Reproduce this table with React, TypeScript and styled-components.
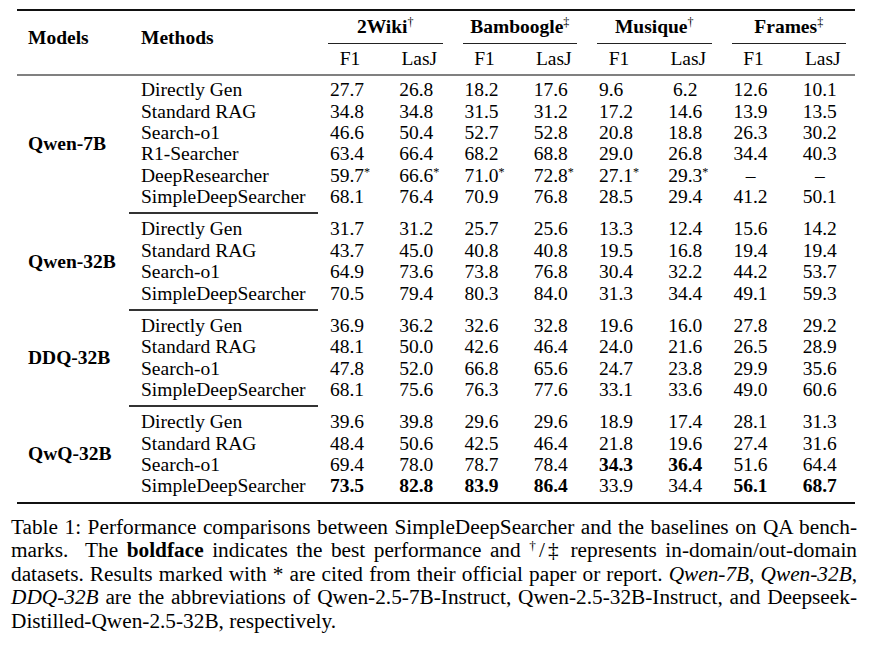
import React from "react";
import styled, { createGlobalStyle } from "styled-components";

const GlobalStyle = createGlobalStyle`
  html, body { margin: 0; padding: 0; background: #fff; }
  body {
    font-family: "Liberation Serif", "Times New Roman", Times, serif;
    color: #000;
  }
`;

const Page = styled.div`
  padding: 9px 0 0 11px;
  width: 846px;
`;

const TableBox = styled.div`
  margin-left: 6px;
  width: 838px;
  border-top: 2px solid #111;
  border-bottom: 2px solid #111;
  font-size: 19.5px;
`;

const Header = styled.div`
  display: grid;
  grid-template-columns: 112px 189px repeat(4, 134.5px);
  grid-template-rows: 32.5px 30.5px;
  border-bottom: 2px solid #808080;
`;

const HeadLabel = styled.div<{ $indent: number; $col: number }>`
  grid-row: 1 / 3;
  grid-column: ${(p) => p.$col};
  padding: 16.3px 0 0 ${(p) => p.$indent}px;
  font-weight: 700;
  line-height: 21.4px;
`;

const GroupHead = styled.div<{ $col: number }>`
  grid-row: 1;
  grid-column: ${(p) => p.$col};
  padding: 0 10px;
`;

const GroupLabel = styled.div`
  height: 31.5px;
  line-height: 31.5px;
  text-align: center;
  font-weight: 700;
  border-bottom: 1px solid #222;
`;

const SubHead = styled.div<{ $col: number }>`
  grid-row: 2;
  grid-column: ${(p) => p.$col};
  display: grid;
  grid-template-columns: 58px 76.5px;
  line-height: 30.5px;
`;

const SubCell = styled.div<{ $wide?: boolean }>`
  text-align: center;
  padding-left: ${(p) => (p.$wide ? 10 : 6)}px;
`;

const Sup = styled.span`
  font-size: 0.62em;
  vertical-align: 0.55em;
  line-height: 0;
  font-weight: 400;
`;

const Star = styled.span`
  display: inline-block;
  width: 0;
  font-size: 0.62em;
  vertical-align: 0.5em;
  line-height: 0;
  overflow: visible;
`;

const Body = styled.div`
  padding: 3.3px 0 5px;
`;

const Group = styled.div`
  display: grid;
  grid-template-columns: 112px 1fr;
`;

const ModelLabel = styled.div`
  align-self: center;
  padding-left: 11px;
  font-weight: 700;
  line-height: 21.4px;
`;

const Rows = styled.div`
  display: flex;
  flex-direction: column;
`;

const Row = styled.div`
  display: grid;
  grid-template-columns: 189px repeat(4, 58px 76.5px);
  height: 21.4px;
  line-height: 21.4px;
  white-space: nowrap;
`;

const Method = styled.div`
  padding-left: 12px;
`;

const Num = styled.div<{ $wide: boolean; $bold: boolean; $shift: boolean }>`
  text-align: center;
  padding-left: ${(p) => (p.$wide ? 4 : 0)}px;
  padding-right: ${(p) => (p.$shift ? "0.5em" : "0")};
  font-weight: ${(p) => (p.$bold ? 700 : 400)};
`;

const GroupRule = styled.div`
  margin: 4.5px 0 4.3px 112px;
  width: 189px;
  border-top: 2px solid #333;
`;

const Caption = styled.div`
  margin-top: 12px;
  width: 846px;
  font-size: 21.3px;
  line-height: 23.5px;
`;

const CaptionLine = styled.div<{ $last?: boolean }>`
  text-align: justify;
  text-align-last: ${(p) => (p.$last ? "left" : "justify")};
`;

type RowData = { method: string; vals: string[] };
type GroupData = { model: string; rows: RowData[] };

// "**" prefix = bold, "<" prefix = nudged left, trailing "*" = starred superscript
const groups: GroupData[] = [
  {
    model: "Qwen-7B",
    rows: [
      { method: "Directly Gen", vals: ["27.7", "26.8", "18.2", "17.6", "<9.6", "6.2", "12.6", "10.1"] },
      { method: "Standard RAG", vals: ["34.8", "34.8", "31.5", "31.2", "17.2", "14.6", "13.9", "13.5"] },
      { method: "Search-o1", vals: ["46.6", "50.4", "52.7", "52.8", "20.8", "18.8", "26.3", "30.2"] },
      { method: "R1-Searcher", vals: ["63.4", "66.4", "68.2", "68.8", "29.0", "26.8", "34.4", "40.3"] },
      { method: "DeepResearcher", vals: ["59.7*", "66.6*", "71.0*", "72.8*", "27.1*", "29.3*", "–", "–"] },
      { method: "SimpleDeepSearcher", vals: ["68.1", "76.4", "70.9", "76.8", "28.5", "29.4", "41.2", "50.1"] },
    ],
  },
  {
    model: "Qwen-32B",
    rows: [
      { method: "Directly Gen", vals: ["31.7", "31.2", "25.7", "25.6", "13.3", "12.4", "15.6", "14.2"] },
      { method: "Standard RAG", vals: ["43.7", "45.0", "40.8", "40.8", "19.5", "16.8", "19.4", "19.4"] },
      { method: "Search-o1", vals: ["64.9", "73.6", "73.8", "76.8", "30.4", "32.2", "44.2", "53.7"] },
      { method: "SimpleDeepSearcher", vals: ["70.5", "79.4", "80.3", "84.0", "31.3", "34.4", "49.1", "59.3"] },
    ],
  },
  {
    model: "DDQ-32B",
    rows: [
      { method: "Directly Gen", vals: ["36.9", "36.2", "32.6", "32.8", "19.6", "16.0", "27.8", "29.2"] },
      { method: "Standard RAG", vals: ["48.1", "50.0", "42.6", "46.4", "24.0", "21.6", "26.5", "28.9"] },
      { method: "Search-o1", vals: ["47.8", "52.0", "66.8", "65.6", "24.7", "23.8", "29.9", "35.6"] },
      { method: "SimpleDeepSearcher", vals: ["68.1", "75.6", "76.3", "77.6", "33.1", "33.6", "49.0", "60.6"] },
    ],
  },
  {
    model: "QwQ-32B",
    rows: [
      { method: "Directly Gen", vals: ["39.6", "39.8", "29.6", "29.6", "18.9", "17.4", "28.1", "31.3"] },
      { method: "Standard RAG", vals: ["48.4", "50.6", "42.5", "46.4", "21.8", "19.6", "27.4", "31.6"] },
      { method: "Search-o1", vals: ["69.4", "78.0", "78.7", "78.4", "**34.3", "**36.4", "51.6", "64.4"] },
      { method: "SimpleDeepSearcher", vals: ["**73.5", "**82.8", "**83.9", "**86.4", "33.9", "34.4", "**56.1", "**68.7"] },
    ],
  },
];

const datasets: { name: string; mark: string }[] = [
  { name: "2Wiki", mark: "†" },
  { name: "Bamboogle", mark: "‡" },
  { name: "Musique", mark: "†" },
  { name: "Frames", mark: "‡" },
];

function parseValue(v: string) {
  let raw = v;
  const bold = raw.startsWith("**");
  if (bold) raw = raw.slice(2);
  const shift = raw.startsWith("<");
  if (shift) raw = raw.slice(1);
  const star = raw.endsWith("*");
  const text = star ? raw.slice(0, -1) : raw;
  return { bold, shift, node: star ? (<>{text}<Star>*</Star></>) : text };
}

export default function App() {
  return (
    <>
      <GlobalStyle />
      <Page>
        <TableBox>
          <Header>
            <HeadLabel $col={1} $indent={11}>Models</HeadLabel>
            <HeadLabel $col={2} $indent={12}>Methods</HeadLabel>
            {datasets.map((d, i) => (
              <GroupHead key={d.name} $col={i + 3}>
                <GroupLabel>
                  {d.name}
                  <Sup>{d.mark}</Sup>
                </GroupLabel>
              </GroupHead>
            ))}
            {datasets.map((d, i) => (
              <SubHead key={d.name + "-sub"} $col={i + 3}>
                <SubCell>F1</SubCell>
                <SubCell $wide>LasJ</SubCell>
              </SubHead>
            ))}
          </Header>
          <Body>
            {groups.map((g, gi) => (
              <React.Fragment key={g.model}>
                {gi > 0 && <GroupRule />}
                <Group>
                  <ModelLabel>{g.model}</ModelLabel>
                  <Rows>
                    {g.rows.map((r) => (
                      <Row key={r.method}>
                        <Method>{r.method}</Method>
                        {r.vals.map((v, vi) => {
                          const { bold, shift, node } = parseValue(v);
                          return (
                            <Num key={vi} $wide={vi % 2 === 1} $bold={bold} $shift={shift}>
                              {node}
                            </Num>
                          );
                        })}
                      </Row>
                    ))}
                  </Rows>
                </Group>
              </React.Fragment>
            ))}
          </Body>
        </TableBox>
        <Caption>
          <CaptionLine>
            Table 1: Performance comparisons between SimpleDeepSearcher and the baselines on QA bench-
          </CaptionLine>
          <CaptionLine>
            marks.&nbsp; The <b>boldface</b> indicates the best performance and <Sup>†</Sup>/‡ represents in-domain/out-domain
          </CaptionLine>
          <CaptionLine>
            datasets. Results marked with * are cited from their official paper or report. <i>Qwen-7B</i>, <i>Qwen-32B</i>,
          </CaptionLine>
          <CaptionLine>
            <i>DDQ-32B</i> are the abbreviations of Qwen-2.5-7B-Instruct, Qwen-2.5-32B-Instruct, and Deepseek-
          </CaptionLine>
          <CaptionLine $last>Distilled-Qwen-2.5-32B, respectively.</CaptionLine>
        </Caption>
      </Page>
    </>
  );
}
